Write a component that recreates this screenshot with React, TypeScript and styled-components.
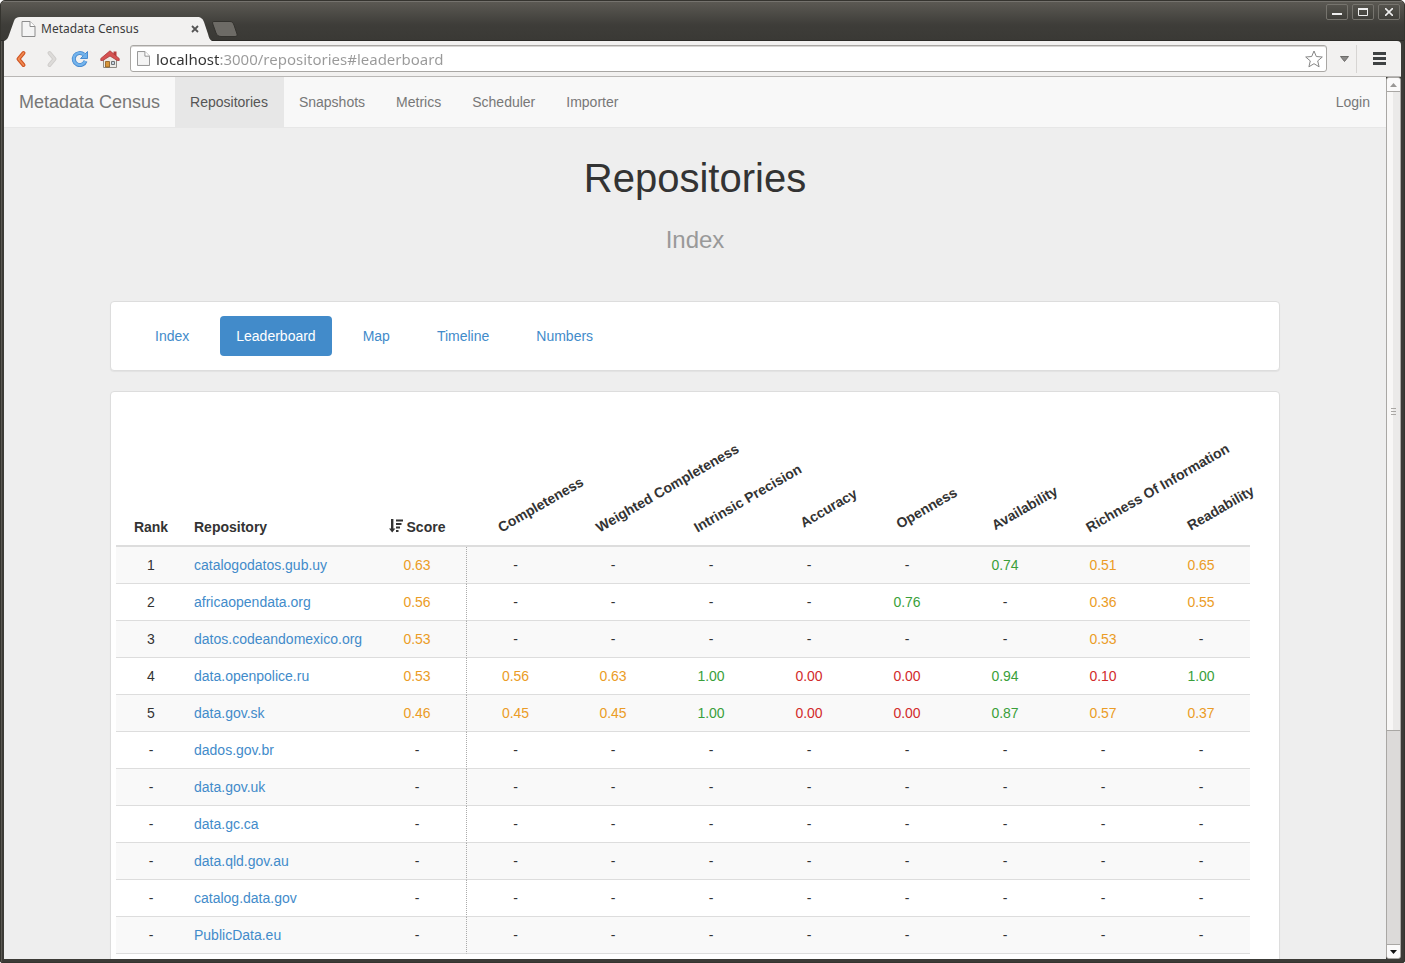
import React from "react";
import styled, { createGlobalStyle } from "styled-components";

const sans = `"Liberation Sans", Arial, sans-serif`;
const chromeSans = `"Noto Sans", "Open Sans", sans-serif`;

const GlobalStyle = createGlobalStyle`
  * { box-sizing: border-box; }
  body { margin: 0; background: #fff; }
  button { font: inherit; margin: 0; padding: 0; cursor: pointer; }
`;

/* ---------- browser window ---------- */

const Window = styled.div`
  display: flex;
  flex-direction: column;
  height: 100vh;
  overflow: hidden;
  background: #3c3b37;
  border: 1px solid #35342f;
  border-radius: 5px 5px 2px 2px;
  box-shadow: inset 0 1px 0 #6d6b66, inset 1px 0 0 #5a5852;
  padding: 0 3px 3px;
`;

const TitleBar = styled.header`
  display: flex;
  align-items: flex-end;
  flex: none;
  height: 40px;
  margin: 0 -3px;
  padding: 0 4px 0 3px;
  background: linear-gradient(#5b5953, #3e3d39 60%, #3a3935);
  border-top: 1px solid #75736e;
  border-bottom: 1px solid #2c2b28;
`;

const Tab = styled.div`
  position: relative;
  display: flex;
  align-items: center;
  width: 208px;
  height: 25px;
  margin-bottom: -1px;
  padding: 0 13px 0 17px;
  font: 12px/16px ${chromeSans};
  color: #3c3c3c;
`;

const TabShape = styled.svg`
  position: absolute;
  left: 0;
  top: 0;
`;

const TabTitle = styled.span`
  position: relative;
  flex: 1;
  margin-left: 5px;
`;

const TabIcon = styled.svg`
  position: relative;
  flex: none;
`;

const TabClose = styled.button`
  position: relative;
  display: flex;
  border: 0;
  background: none;
`;

const NewTab = styled.button`
  display: flex;
  align-self: flex-end;
  border: 0;
  margin-bottom: 3px;
  background: none;
`;

const WindowControls = styled.div`
  display: flex;
  gap: 4px;
  align-self: flex-start;
  margin: 2px 0 0 auto;
`;

const WindowButton = styled.button`
  display: flex;
  align-items: center;
  justify-content: center;
  width: 22px;
  height: 16px;
  border: 1px solid #76746e;
  border-radius: 2px;
  background: linear-gradient(#55534d, #403f3a);
`;

const Toolbar = styled.div`
  display: flex;
  align-items: center;
  flex: none;
  height: 36px;
  background: #f2f1f0;
  border-bottom: 1px solid #b9b7b5;
  border-radius: 0 4px 0 0;
`;

const ToolButton = styled.button<{ $width: number }>`
  display: flex;
  align-items: center;
  justify-content: center;
  width: ${(p) => p.$width}px;
  height: 28px;
  border: 0;
  background: none;
`;

const AddressBar = styled.label`
  display: flex;
  align-items: center;
  flex: 1;
  height: 27px;
  margin-left: 6px;
  padding: 0 3px 0 6px;
  background: #fff;
  border: 1px solid #a9a7a4;
  border-radius: 3px;
  box-shadow: inset 0 1px 0 #d8d6d4;
`;

const AddressInput = styled.input`
  flex: 1;
  min-width: 0;
  height: 22px;
  margin-left: 6px;
  padding: 0;
  border: 0;
  outline: 0;
  font: 15px/22px ${chromeSans};
  color: transparent;
  caret-color: #333;
  background: linear-gradient(to right, #333 63px, #999 63px);
  -webkit-background-clip: text;
  background-clip: text;
`;

const ToolDivider = styled.span`
  width: 1px;
  height: 28px;
  background: #d7d5d3;
`;

const Viewport = styled.div`
  display: flex;
  flex: 1;
  min-height: 0;
`;

const Page = styled.div`
  flex: 1;
  min-width: 0;
  overflow: hidden;
  background: #eee;
  font: 14px/20px ${sans};
  color: #333;
`;

const ScrollBar = styled.div`
  display: flex;
  flex-direction: column;
  flex: none;
  width: 15px;
  border: 1px solid #a9a7a4;
  border-radius: 3px;
  background: #dcdad9;
`;

const ScrollArrow = styled.button<{ $end?: boolean }>`
  display: flex;
  align-items: center;
  justify-content: center;
  height: 14px;
  border: 0 solid #a9a7a4;
  border-width: ${(p) => (p.$end ? "1px 0 0" : "0 0 1px")};
  border-radius: ${(p) => (p.$end ? "0 0 2px 2px" : "2px 2px 0 0")};
  background: #fbfafa;
`;

const ScrollTrack = styled.div`
  flex: 1;
`;

const ScrollThumb = styled.div`
  display: flex;
  align-items: center;
  justify-content: center;
  height: 75%;
  border-bottom: 1px solid #a9a7a4;
  background: linear-gradient(to right, #f8f7f6 50%, #ebeae9 50%);
`;

/* ---------- site ---------- */

const NavBar = styled.nav`
  display: flex;
  background: #f8f8f8;
  border-bottom: 1px solid #e7e7e7;
`;

const Brand = styled.a`
  padding: 15px;
  font-size: 18px;
  color: #777;
  text-decoration: none;
`;

const NavLink = styled.a<{ $active?: boolean; $end?: boolean }>`
  padding: 15px 16px 15px 15px;
  margin-left: ${(p) => (p.$end ? "auto" : "0")};
  color: ${(p) => (p.$active ? "#555" : "#777")};
  background: ${(p) => (p.$active ? "#e7e7e7" : "transparent")};
  text-decoration: none;
`;

const Hero = styled.header`
  padding: 25px 15px 46px;
  text-align: center;
`;

const Title = styled.h1`
  margin: 0;
  font-size: 40px;
  line-height: 50px;
  font-weight: 400;
`;

const Subtitle = styled.p`
  margin: 22px 0 0;
  font-size: 24px;
  line-height: 30px;
  color: #999;
`;

const Container = styled.main`
  max-width: 1170px;
  margin: 0 auto;
`;

const Panel = styled.section`
  margin-bottom: 20px;
  background: #fff;
  border: 1px solid #ddd;
  border-radius: 4px;
  box-shadow: 0 1px 1px rgba(0, 0, 0, 0.05);
`;

const Pills = styled.nav`
  display: flex;
  gap: 15px;
  padding: 14px 28px;
`;

const Pill = styled.a<{ $active?: boolean }>`
  padding: 10px 16px;
  border-radius: 4px;
  color: ${(p) => (p.$active ? "#fff" : "#428bca")};
  background: ${(p) => (p.$active ? "#428bca" : "transparent")};
  text-decoration: none;
`;

const TableWrap = styled.div`
  padding: 15px 29px 15px 5px;
`;

const Table = styled.table`
  width: 100%;
  table-layout: fixed;
  border-collapse: separate;
  border-spacing: 0;
`;

const Col = styled.col<{ $width: number }>`
  width: ${(p) => p.$width}px;
`;

const HeadCell = styled.th<{ $left?: boolean }>`
  height: 140px;
  padding: 8px;
  vertical-align: bottom;
  text-align: ${(p) => (p.$left ? "left" : "center")};
  border-bottom: 2px solid #ddd;
  white-space: nowrap;
`;

const MetricLabel = styled.span`
  display: block;
  width: 82px;
  margin-left: 30px;
  text-align: center;
  transform: rotate(-30deg);
  transform-origin: left bottom;
`;

const SortIcon = styled.svg`
  margin-right: 4px;
  vertical-align: -1px;
`;

const Row = styled.tr`
  &:nth-child(odd) { background: #f9f9f9; }
`;

type Tone = "none" | "low" | "mid" | "high";
const toneColor: Record<Tone, string> = {
  none: "#333",
  low: "#d22b2b",
  mid: "#eb9c26",
  high: "#3a9f3a",
};

const Cell = styled.td<{ $tone?: Tone; $left?: boolean; $rule?: boolean }>`
  height: 37px;
  padding: 8px;
  text-align: ${(p) => (p.$left ? "left" : "center")};
  color: ${(p) => toneColor[p.$tone ?? "none"]};
  border-bottom: 1px solid #ddd;
  border-left: ${(p) => (p.$rule ? "1px dotted #aaa" : "0")};
`;

const RepoLink = styled.a`
  color: #428bca;
  text-decoration: none;
`;

/* ---------- data ---------- */

const metrics = [
  "Completeness",
  "Weighted Completeness",
  "Intrinsic Precision",
  "Accuracy",
  "Openness",
  "Availability",
  "Richness Of Information",
  "Readability",
];

const unranked = "- - - - - - - - -";
const repositories: [string, string, string][] = [
  ["1", "catalogodatos.gub.uy", "0.63 - - - - - 0.74 0.51 0.65"],
  ["2", "africaopendata.org", "0.56 - - - - 0.76 - 0.36 0.55"],
  ["3", "datos.codeandomexico.org", "0.53 - - - - - - 0.53 -"],
  ["4", "data.openpolice.ru", "0.53 0.56 0.63 1.00 0.00 0.00 0.94 0.10 1.00"],
  ["5", "data.gov.sk", "0.46 0.45 0.45 1.00 0.00 0.00 0.87 0.57 0.37"],
  ["-", "dados.gov.br", unranked],
  ["-", "data.gov.uk", unranked],
  ["-", "data.gc.ca", unranked],
  ["-", "data.qld.gov.au", unranked],
  ["-", "catalog.data.gov", unranked],
  ["-", "PublicData.eu", unranked],
];

const toneOf = (value: string): Tone => {
  if (value === "-") return "none";
  const n = Number(value);
  return n < 0.33 ? "low" : n < 0.7 ? "mid" : "high";
};

const PageGlyph = ({ w, h }: { w: number; h: number }) => (
  <TabIcon width={w} height={h} viewBox="0 0 14 16" aria-hidden="true">
    <path d="M.5.5h8l5 5v10H.5z" fill="#f4f4f4" stroke="#8c8c8c" />
    <path d="M8.5.5v5h5" fill="#fff" stroke="#8c8c8c" />
  </TabIcon>
);

export default function App() {
  return (
    <>
      <GlobalStyle />
      <Window>
        <TitleBar>
          <Tab>
            <TabShape width="208" height="25" viewBox="0 0 208 25" aria-hidden="true">
              <path
                d="M0 25C3 24 4 22 5 19L10 5C11 2 13 1 16 1H193C197 1 199 3 200 6L204 18C205 22 206 24 208 25Z"
                fill="#f2f1f0"
              />
            </TabShape>
            <PageGlyph w={15} h={16} />
            <TabTitle>Metadata Census</TabTitle>
            <TabClose aria-label="Close tab">
              <svg width="8" height="8" viewBox="0 0 8 8">
                <path d="M1 1l6 6M7 1L1 7" stroke="#555" strokeWidth="1.8" />
              </svg>
            </TabClose>
          </Tab>
          <NewTab aria-label="New tab">
            <svg width="26" height="16" viewBox="0 0 26 16">
              <path
                d="M2 .5H18C20 .5 21 1.500 22 4L25 13C25.500 14.500 25 15.500 23 15.500H9C6 15.500 5 14 4 12L.8 3C.3 1.500 .5 .5 2 .5Z"
                fill="#6d6b66"
                stroke="#33322e"
              />
            </svg>
          </NewTab>
          <WindowControls>
            <WindowButton aria-label="Minimize">
              <svg width="10" height="8" viewBox="0 0 10 8">
                <path d="M0 6h10" stroke="#eee" strokeWidth="2" />
              </svg>
            </WindowButton>
            <WindowButton aria-label="Maximize">
              <svg width="10" height="8" viewBox="0 0 10 8">
                <path d="M.5 1.500h9M.5 0v7.500h9V0M0 .5h10" fill="none" stroke="#eee" />
              </svg>
            </WindowButton>
            <WindowButton aria-label="Close">
              <svg width="8" height="8" viewBox="0 0 8 8">
                <path d="M0 0l8 8M8 0L0 8" stroke="#eee" strokeWidth="1.600" />
              </svg>
            </WindowButton>
          </WindowControls>
        </TitleBar>

        <Toolbar>
          <ToolButton $width={34} aria-label="Back">
            <svg width="12" height="18" viewBox="0 0 12 18">
              <path d="M8.500 3L3.500 9l5 6" fill="none" stroke="#cf5422" strokeWidth="4" strokeLinecap="round" strokeLinejoin="round" />
              <path d="M8.500 3L3.500 9l5 6" fill="none" stroke="#f08a52" strokeWidth="1.800" strokeLinecap="round" strokeLinejoin="round" />
            </svg>
          </ToolButton>
          <ToolButton $width={27} aria-label="Forward">
            <svg width="12" height="18" viewBox="0 0 12 18">
              <path d="M3.500 3l5 6-5 6" fill="none" stroke="#cfcdcb" strokeWidth="4" strokeLinecap="round" strokeLinejoin="round" />
              <path d="M3.500 3l5 6-5 6" fill="none" stroke="#dddbd9" strokeWidth="2" strokeLinecap="round" strokeLinejoin="round" />
            </svg>
          </ToolButton>
          <ToolButton $width={30} aria-label="Reload">
            <svg width="18" height="18" viewBox="0 0 18 18">
              <path d="M12.800 4.600A6 6 0 1 0 14.500 11" fill="none" stroke="#4a8bd0" strokeWidth="4" />
              <path d="M16.500 1.500v7h-7z" fill="#6fb0ea" stroke="#4a8bd0" strokeLinejoin="round" />
              <path d="M13.300 5A6 6 0 1 0 14.300 11" fill="none" stroke="#74b4ec" strokeWidth="2.400" />
            </svg>
          </ToolButton>
          <ToolButton $width={29} aria-label="Home">
            <svg width="20" height="18" viewBox="0 0 20 18">
              <path d="M13.500 1.500h3v5h-3z" fill="#b93c3c" />
              <path d="M3.500 9L10 3l6.500 6v8.500h-13z" fill="#eceae6" stroke="#8f8b85" />
              <path d="M10 .8L19.200 8.500v2h-2L10 6 2.800 10.500h-2v-2z" fill="#d65252" stroke="#a93a3a" strokeWidth=".8" />
              <path d="M5.500 11.500h4v5.500h-4z" fill="#d8963a" stroke="#8a5a1c" strokeWidth=".8" />
              <path d="M11.500 11.500h3v3h-3z" fill="#c8d4e0" stroke="#6f7478" />
            </svg>
          </ToolButton>
          <AddressBar>
            <PageGlyph w={13} h={15} />
            <AddressInput
              aria-label="Address"
              type="text"
              spellCheck={false}
              defaultValue="localhost:3000/repositories#leaderboard"
            />
            <svg width="18" height="18" viewBox="0 0 18 18" aria-hidden="true">
              <path
                d="M9 1l2.300 5.500 6 .5-4.600 3.900 1.400 5.900L9 13.700l-5.100 3.100 1.400-5.900L.7 7l6-.5z"
                fill="#fff"
                stroke="#858585"
                strokeLinejoin="round"
              />
            </svg>
          </AddressBar>
          <ToolButton $width={29} aria-label="Show page actions">
            <svg width="15" height="6" viewBox="-6 0 15 6">
              <path d="M.5.5h8L4.500 5.500z" fill="#8b8a88" stroke="#6d6c6a" />
            </svg>
          </ToolButton>
          <ToolDivider />
          <ToolButton $width={44} aria-label="Menu">
            <svg width="13" height="13" viewBox="0 0 13 13">
              <path d="M0 1.500h13M0 6.500h13M0 11.500h13" stroke="#3f4243" strokeWidth="3" />
            </svg>
          </ToolButton>
        </Toolbar>

        <Viewport>
          <Page>
            <NavBar>
              <Brand href="#home">Metadata Census</Brand>
              <NavLink href="#repositories" $active>Repositories</NavLink>
              <NavLink href="#snapshots">Snapshots</NavLink>
              <NavLink href="#metrics">Metrics</NavLink>
              <NavLink href="#scheduler">Scheduler</NavLink>
              <NavLink href="#importer">Importer</NavLink>
              <NavLink href="#login" $end>Login</NavLink>
            </NavBar>

            <Hero>
              <Title>Repositories</Title>
              <Subtitle>Index</Subtitle>
            </Hero>

            <Container>
              <Panel>
                <Pills>
                  <Pill href="#index">Index</Pill>
                  <Pill href="#leaderboard" $active>Leaderboard</Pill>
                  <Pill href="#map">Map</Pill>
                  <Pill href="#timeline">Timeline</Pill>
                  <Pill href="#numbers">Numbers</Pill>
                </Pills>
              </Panel>

              <Panel>
                <TableWrap>
                  <Table>
                    <colgroup>
                      <Col $width={70} />
                      <Col $width={182} />
                      <Col $width={98} />
                      {metrics.map((m) => <Col key={m} $width={98} />)}
                    </colgroup>
                    <thead>
                      <tr>
                        <HeadCell scope="col">Rank</HeadCell>
                        <HeadCell scope="col" $left>Repository</HeadCell>
                        <HeadCell scope="col">
                          <SortIcon width="14" height="14" viewBox="0 0 14 14" aria-hidden="true">
                            <path d="M2 0h2.400v9.500H6.400L3.200 13.500 0 9.500h2z" fill="#333" />
                            <path d="M7 .5h7v2H7zM7 4h5.500v2H7zM7 7.500h4v2H7zM7 11h2.500v2H7z" fill="#333" />
                          </SortIcon>
                          Score
                        </HeadCell>
                        {metrics.map((m) => (
                          <HeadCell key={m} scope="col" $left>
                            <MetricLabel>{m}</MetricLabel>
                          </HeadCell>
                        ))}
                      </tr>
                    </thead>
                    <tbody>
                      {repositories.map(([rank, name, values]) => (
                        <Row key={name}>
                          <Cell>{rank}</Cell>
                          <Cell $left>
                            <RepoLink href={`#${name}`}>{name}</RepoLink>
                          </Cell>
                          {values.split(" ").map((v, i) => (
                            <Cell key={i} $tone={toneOf(v)} $rule={i === 1}>{v}</Cell>
                          ))}
                        </Row>
                      ))}
                    </tbody>
                  </Table>
                </TableWrap>
              </Panel>
            </Container>
          </Page>

          <ScrollBar>
            <ScrollArrow aria-label="Scroll up">
              <svg width="7" height="4" viewBox="0 0 7 4">
                <path d="M0 4L3.500 0 7 4z" fill="#9a9896" />
              </svg>
            </ScrollArrow>
            <ScrollTrack>
              <ScrollThumb>
                <svg width="5" height="7" viewBox="0 0 5 7">
                  <path d="M0 .5h5M0 3.500h5M0 6.500h5" stroke="#a9a7a4" />
                </svg>
              </ScrollThumb>
            </ScrollTrack>
            <ScrollArrow $end aria-label="Scroll down">
              <svg width="7" height="4" viewBox="0 0 7 4">
                <path d="M0 0h7L3.500 4z" fill="#111" />
              </svg>
            </ScrollArrow>
          </ScrollBar>
        </Viewport>
      </Window>
    </>
  );
}
